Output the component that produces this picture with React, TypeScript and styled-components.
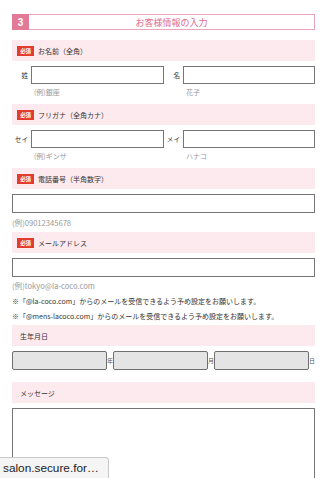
import React from 'react';
import styled, { createGlobalStyle } from 'styled-components';

const GlobalStyle = createGlobalStyle`
  html, body {
    margin: 0;
    padding: 0;
    background: #ffffff;
  }
  body {
    font-family: "Noto Sans CJK JP", "Noto Sans", sans-serif;
    color: #333333;
    overflow: hidden;
  }
`;

const Page = styled.div`
  width: 303px;
  padding: 14px 13px 0 12px;
  height: 478px;
  box-sizing: content-box;
  overflow: hidden;
`;

const StepHeader = styled.div`
  display: flex;
  height: 16px;
  border: 1px solid #eba3b9;
  box-sizing: border-box;
`;

const StepNumber = styled.div`
  width: 17px;
  margin: -1px 0 -1px -1px;
  background: #e27a97;
  color: #ffffff;
  font-family: "Liberation Sans", Arial, sans-serif;
  font-weight: bold;
  font-size: 10px;
  display: flex;
  align-items: center;
  justify-content: center;
`;

const StepTitle = styled.div`
  flex: 1;
  display: flex;
  align-items: center;
  justify-content: center;
  color: #e06c8e;
  font-size: 9px;
  line-height: 1;
`;

const LabelBar = styled.div<{ $top?: number }>`
  margin-top: ${(p) => p.$top ?? 0}px;
  height: 21px;
  background: #fdeaee;
  display: flex;
  align-items: center;
  padding-left: 5px;
  gap: 4px;
  font-size: 7px;
  color: #333333;
`;

const PlainLabel = styled.span`
  padding-left: 3px;
`;

const Required = styled.span`
  width: 17px;
  height: 10px;
  background: #e23b2e;
  color: #ffffff;
  font-weight: bold;
  font-size: 5.5px;
  display: flex;
  align-items: center;
  justify-content: center;
  letter-spacing: -0.2px;
`;

const PairRow = styled.div`
  margin-top: 5px;
  display: grid;
  grid-template-columns: 19px 133px 19px 1fr;
  align-items: center;
`;

const PairLabel = styled.span`
  font-size: 6.6px;
  text-align: right;
  padding-right: 3px;
  color: #333333;
`;

const TextBox = styled.div<{ $h?: number }>`
  height: ${(p) => p.$h ?? 18}px;
  border: 1px solid #767676;
  box-sizing: border-box;
  background: #ffffff;
`;

const FullBox = styled(TextBox)`
  margin-top: 5px;
`;

const HintRow = styled.div`
  display: grid;
  grid-template-columns: 19px 133px 19px 1fr;
  height: 20px;
`;

const Hint = styled.span<{ $col: number }>`
  grid-column: ${(p) => p.$col};
  padding: 4px 0 0 3px;
  font-size: 7px;
  line-height: 9px;
  color: #9a9a9a;
`;

const HintLine = styled.div<{ $h: number }>`
  height: ${(p) => p.$h}px;
  display: flex;
  align-items: center;
  font-size: 7.6px;
  color: #9a9a9a;
`;

const NoteLine = styled.div`
  height: 15px;
  display: flex;
  align-items: center;
  font-size: 7px;
  color: #333333;
  white-space: nowrap;
`;

const DateRow = styled.div`
  margin-top: 5px;
  display: flex;
  align-items: center;
`;

const DateSelect = styled.div`
  flex: 1;
  height: 19px;
  background: #e4e4e4;
  border: 1px solid #6f6f6f;
  border-radius: 2px;
  box-sizing: border-box;
`;

const DateUnit = styled.span`
  width: 6px;
  font-size: 6px;
  color: #555555;
  text-align: center;
`;

const MessageBox = styled.div`
  margin-top: 5px;
  height: 120px;
  border: 1px solid #767676;
  box-sizing: border-box;
`;

const StatusTip = styled.div`
  position: fixed;
  left: 0;
  bottom: 0;
  height: 21px;
  padding: 0 9px 0 3px;
  background: #f5f5f5;
  border-top: 1px solid #c9c9c9;
  border-right: 1px solid #c9c9c9;
  border-top-right-radius: 4px;
  box-sizing: border-box;
  display: flex;
  align-items: center;
  font-family: "Liberation Sans", Arial, sans-serif;
  font-size: 11.8px;
  color: #222222;
`;

const Badge = () => <Required>必須</Required>;

const App: React.FC = () => {
  return (
    <>
      <GlobalStyle />
      <Page>
        <StepHeader>
          <StepNumber>3</StepNumber>
          <StepTitle>お客様情報の入力</StepTitle>
        </StepHeader>

        <LabelBar $top={10}>
          <Badge />
          お名前（全角）
        </LabelBar>
        <PairRow>
          <PairLabel>姓</PairLabel>
          <TextBox />
          <PairLabel>名</PairLabel>
          <TextBox />
        </PairRow>
        <HintRow>
          <Hint $col={2}>(例)銀座</Hint>
          <Hint $col={4}>花子</Hint>
        </HintRow>

        <LabelBar>
          <Badge />
          フリガナ（全角カナ）
        </LabelBar>
        <PairRow>
          <PairLabel>セイ</PairLabel>
          <TextBox />
          <PairLabel>メイ</PairLabel>
          <TextBox />
        </PairRow>
        <HintRow>
          <Hint $col={2}>(例)ギンザ</Hint>
          <Hint $col={4}>ハナコ</Hint>
        </HintRow>

        <LabelBar>
          <Badge />
          電話番号（半角数字）
        </LabelBar>
        <FullBox $h={19} />
        <HintLine $h={19}>(例)09012345678</HintLine>

        <LabelBar>
          <Badge />
          メールアドレス
        </LabelBar>
        <FullBox $h={19} />
        <HintLine $h={16}>(例)tokyo@la-coco.com</HintLine>
        <NoteLine>※「@la-coco.com」からのメールを受信できるよう予め設定をお願いします。</NoteLine>
        <NoteLine>※「@mens-lacoco.com」からのメールを受信できるよう予め設定をお願いします。</NoteLine>

        <LabelBar $top={2}>
          <PlainLabel>生年月日</PlainLabel>
        </LabelBar>
        <DateRow>
          <DateSelect />
          <DateUnit>年</DateUnit>
          <DateSelect />
          <DateUnit>月</DateUnit>
          <DateSelect />
          <DateUnit>日</DateUnit>
        </DateRow>

        <LabelBar $top={12}>
          <PlainLabel>メッセージ</PlainLabel>
        </LabelBar>
        <MessageBox />
      </Page>
      <StatusTip>salon.secure.for…</StatusTip>
    </>
  );
};

export default App;
